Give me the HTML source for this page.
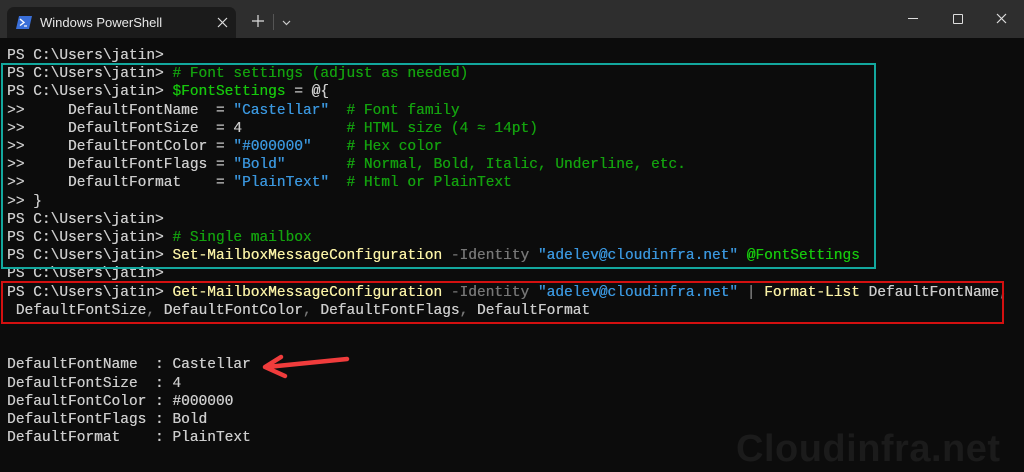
<!DOCTYPE html>
<html><head><meta charset="utf-8"><style>
body{margin:0;width:1024px;height:472px;background:#0c0c0c;overflow:hidden;position:relative;font-family:"Liberation Sans",sans-serif}
.title{position:absolute;left:0;top:0;width:1024px;height:38px;background:#2e2e2e}
.tab{position:absolute;left:7px;top:7px;width:229px;height:31px;background:#1b1b1b;border-radius:7px 7px 0 0}
.tab span{position:absolute;left:33px;top:8px;color:#e8e8e8;font-size:13px}
pre{position:absolute;left:7px;top:47px;margin:0;font-family:"Liberation Mono",monospace;font-size:14.5px;line-height:18.2px;color:#cccccc;text-shadow:0.3px 0 0 currentColor}
.g{color:#16c60c}.c{color:#13a10e}.s{color:#3a96dd}.y{color:#f9f1a5}.p{color:#767676}
.box{position:absolute;border:2px solid}
.wm{position:absolute;left:736px;top:428px;font-size:38px;font-weight:bold;color:#1b1b1b;letter-spacing:0.5px}
</style></head><body>
<div class="title"></div>
<div class="tab">
<svg style="position:absolute;left:9px;top:9px" width="16" height="13"><polygon points="3,0 16,0 13,13 0,13" fill="#3a6fd8"/><path d="M4 3 L8 6.5 L4 9.5" stroke="#fff" stroke-width="1.4" fill="none"/><path d="M8 10 L11 10" stroke="#fff" stroke-width="1.2"/></svg>
<span>Windows PowerShell</span>
<svg style="position:absolute;left:210px;top:10px" width="11" height="11"><path d="M1 1L10 10M10 1L1 10" stroke="#ddd" stroke-width="1.2"/></svg>
</div>
<svg style="position:absolute;left:252px;top:15px" width="12" height="12"><path d="M6 0V12M0 6H12" stroke="#ddd" stroke-width="1.2"/></svg>
<div style="position:absolute;left:273px;top:14px;width:1px;height:16px;background:#555"></div>
<svg style="position:absolute;left:282px;top:20px" width="9" height="6"><path d="M1 1L4.5 4.5L8 1" stroke="#ccc" stroke-width="1.2" fill="none"/></svg>
<div style="position:absolute;left:908px;top:18px;width:10px;height:1px;background:#ddd"></div>
<div style="position:absolute;left:953px;top:14px;width:8px;height:8px;border:1px solid #ddd;border-radius:1px"></div>
<svg style="position:absolute;left:996px;top:13px" width="11" height="11"><path d="M1 1L10 10M10 1L1 10" stroke="#ddd" stroke-width="1.2"/></svg>
<div class="wm">Cloudinfra.net</div>
<pre>PS C:\Users\jatin>
PS C:\Users\jatin> <span class="c"># Font settings (adjust as needed)</span>
PS C:\Users\jatin> <span class="g">$FontSettings</span> = @{
>>     DefaultFontName  = <span class="s">"Castellar"</span>  <span class="c"># Font family</span>
>>     DefaultFontSize  = 4            <span class="c"># HTML size (4 ≈ 14pt)</span>
>>     DefaultFontColor = <span class="s">"#000000"</span>    <span class="c"># Hex color</span>
>>     DefaultFontFlags = <span class="s">"Bold"</span>       <span class="c"># Normal, Bold, Italic, Underline, etc.</span>
>>     DefaultFormat    = <span class="s">"PlainText"</span>  <span class="c"># Html or PlainText</span>
>> }
PS C:\Users\jatin>
PS C:\Users\jatin> <span class="c"># Single mailbox</span>
PS C:\Users\jatin> <span class="y">Set-MailboxMessageConfiguration</span> <span class="p">-Identity</span> <span class="s">"adelev@cloudinfra.net"</span> <span class="g">@FontSettings</span>
PS C:\Users\jatin>
PS C:\Users\jatin> <span class="y">Get-MailboxMessageConfiguration</span> <span class="p">-Identity</span> <span class="s">"adelev@cloudinfra.net"</span> <span class="p">|</span> <span class="y">Format-List</span> DefaultFontName<span class="p">,</span>
 DefaultFontSize<span class="p">,</span> DefaultFontColor<span class="p">,</span> DefaultFontFlags<span class="p">,</span> DefaultFormat


DefaultFontName  : Castellar
DefaultFontSize  : 4
DefaultFontColor : #000000
DefaultFontFlags : Bold
DefaultFormat    : PlainText</pre>
<div class="box" style="left:1px;top:63px;width:871px;height:202px;border-color:#13a89e"></div>
<div class="box" style="left:1px;top:281px;width:999px;height:39px;border-color:#d41010"></div>
<svg style="position:absolute;left:255px;top:350px" width="100" height="35"><path d="M92 9 L12 17 M26 7 L10 17 L30 26" stroke="#f03c3c" stroke-width="4.5" stroke-linecap="round" stroke-linejoin="round" fill="none"/></svg>
</body></html>
